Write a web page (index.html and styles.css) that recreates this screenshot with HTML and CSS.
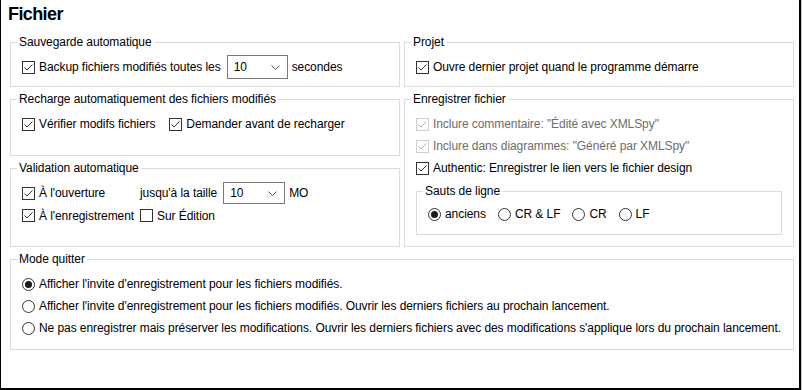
FILE: index.html
```html
<!DOCTYPE html>
<html lang="fr">
<head>
<meta charset="utf-8">
<title>Fichier</title>
<link rel="stylesheet" href="styles.css">
</head>
<body>
<div class="window">
  <h1 class="title">Fichier</h1>
  <div class="grid">
    <fieldset class="group save">
      <legend>Sauvegarde automatique</legend>
      <div class="body pad6">
        <div class="row tall">
          <label class="opt"><svg class="ic" viewBox="0 0 13 13"><rect x="0.5" y="0.5" width="12" height="12" fill="#fff" stroke="#333"/><path d="M2.5 6.5 L5 9 L10.5 3.5" fill="none" stroke="#333"/></svg>Backup fichiers modifiés toutes les</label>
          <span class="select s1">10<svg class="chev" viewBox="0 0 9 5"><path d="M0.5 0.5 L4.5 4.5 L8.5 0.5" fill="none" stroke="#555"/></svg></span>
          <span class="after">secondes</span>
        </div>
      </div>
    </fieldset>

    <fieldset class="group proj">
      <legend>Projet</legend>
      <div class="body pad6">
        <div class="row tall">
          <label class="opt"><svg class="ic" viewBox="0 0 13 13"><rect x="0.5" y="0.5" width="12" height="12" fill="#fff" stroke="#333"/><path d="M2.5 6.5 L5 9 L10.5 3.5" fill="none" stroke="#333"/></svg>Ouvre dernier projet quand le programme démarre</label>
        </div>
      </div>
    </fieldset>

    <fieldset class="group reload">
      <legend>Recharge automatiquement des fichiers modifiés</legend>
      <div class="body pad7">
        <div class="row gap14">
          <label class="opt"><svg class="ic" viewBox="0 0 13 13"><rect x="0.5" y="0.5" width="12" height="12" fill="#fff" stroke="#333"/><path d="M2.5 6.5 L5 9 L10.5 3.5" fill="none" stroke="#333"/></svg>Vérifier modifs fichiers</label>
          <label class="opt"><svg class="ic" viewBox="0 0 13 13"><rect x="0.5" y="0.5" width="12" height="12" fill="#fff" stroke="#333"/><path d="M2.5 6.5 L5 9 L10.5 3.5" fill="none" stroke="#333"/></svg>Demander avant de recharger</label>
        </div>
      </div>
    </fieldset>

    <fieldset class="group valid">
      <legend>Validation automatique</legend>
      <div class="body pad7">
        <div class="vgrid">
          <label class="opt"><svg class="ic" viewBox="0 0 13 13"><rect x="0.5" y="0.5" width="12" height="12" fill="#fff" stroke="#333"/><path d="M2.5 6.5 L5 9 L10.5 3.5" fill="none" stroke="#333"/></svg>À l'ouverture</label>
          <div class="row">
            <span>jusqu'à la taille</span>
            <span class="select s2">10<svg class="chev" viewBox="0 0 9 5"><path d="M0.5 0.5 L4.5 4.5 L8.5 0.5" fill="none" stroke="#555"/></svg></span>
            <span class="after">MO</span>
          </div>
          <label class="opt"><svg class="ic" viewBox="0 0 13 13"><rect x="0.5" y="0.5" width="12" height="12" fill="#fff" stroke="#333"/><path d="M2.5 6.5 L5 9 L10.5 3.5" fill="none" stroke="#333"/></svg>À l'enregistrement</label>
          <label class="opt"><svg class="ic" viewBox="0 0 13 13"><rect x="0.5" y="0.5" width="12" height="12" fill="#fff" stroke="#333"/></svg>Sur Édition</label>
        </div>
      </div>
    </fieldset>

    <fieldset class="group file">
      <legend>Enregistrer fichier</legend>
      <div class="body pad7">
        <label class="opt row disabled"><svg class="ic" viewBox="0 0 13 13"><rect x="0.5" y="0.5" width="12" height="12" fill="#fff" stroke="#cfcfcf"/><path d="M2.5 6.5 L5 9 L10.5 3.5" fill="none" stroke="#b0b0b0"/></svg>Inclure commentaire: "Édité avec XMLSpy"</label>
        <label class="opt row disabled"><svg class="ic" viewBox="0 0 13 13"><rect x="0.5" y="0.5" width="12" height="12" fill="#fff" stroke="#cfcfcf"/><path d="M2.5 6.5 L5 9 L10.5 3.5" fill="none" stroke="#b0b0b0"/></svg>Inclure dans diagrammes: "Généré par XMLSpy"</label>
        <label class="opt row"><svg class="ic" viewBox="0 0 13 13"><rect x="0.5" y="0.5" width="12" height="12" fill="#fff" stroke="#333"/><path d="M2.5 6.5 L5 9 L10.5 3.5" fill="none" stroke="#333"/></svg>Authentic: Enregistrer le lien vers le fichier design</label>
        <fieldset class="group eol">
          <legend>Sauts de ligne</legend>
          <div class="body pad5">
            <div class="row radios">
              <label class="opt"><svg class="ic" viewBox="0 0 13 13"><circle cx="6.5" cy="6.5" r="6" fill="#fff" stroke="#333"/><circle cx="6.5" cy="6.5" r="3.5" fill="#1a1a1a"/></svg>anciens</label>
              <label class="opt"><svg class="ic" viewBox="0 0 13 13"><circle cx="6.5" cy="6.5" r="6" fill="#fff" stroke="#333"/></svg>CR &amp; LF</label>
              <label class="opt"><svg class="ic" viewBox="0 0 13 13"><circle cx="6.5" cy="6.5" r="6" fill="#fff" stroke="#333"/></svg>CR</label>
              <label class="opt"><svg class="ic" viewBox="0 0 13 13"><circle cx="6.5" cy="6.5" r="6" fill="#fff" stroke="#333"/></svg>LF</label>
            </div>
          </div>
        </fieldset>
      </div>
    </fieldset>

    <fieldset class="group quit">
      <legend>Mode quitter</legend>
      <div class="body pad7">
        <label class="opt row"><svg class="ic" viewBox="0 0 13 13"><circle cx="6.5" cy="6.5" r="6" fill="#fff" stroke="#333"/><circle cx="6.5" cy="6.5" r="3.5" fill="#1a1a1a"/></svg>Afficher l'invite d'enregistrement pour les fichiers modifiés.</label>
        <label class="opt row"><svg class="ic" viewBox="0 0 13 13"><circle cx="6.5" cy="6.5" r="6" fill="#fff" stroke="#333"/></svg>Afficher l'invite d'enregistrement pour les fichiers modifiés. Ouvrir les derniers fichiers au prochain lancement.</label>
        <label class="opt row"><svg class="ic" viewBox="0 0 13 13"><circle cx="6.5" cy="6.5" r="6" fill="#fff" stroke="#333"/></svg>Ne pas enregistrer mais préserver les modifications. Ouvrir les derniers fichiers avec des modifications s'applique lors du prochain lancement.</label>
      </div>
    </fieldset>
  </div>
</div>
</body>
</html>
```

FILE: styles.css
```css
* { box-sizing: border-box; }
html { background: #c8c8c8; }
html, body { margin: 0; padding: 0; }
body {
  font-family: "Liberation Sans", Arial, sans-serif;
  font-size: 12px;
  letter-spacing: -0.07px;
  color: #000;
}
.window {
  width: 801px;
  height: 390px;
  background: #fff;
  border-left: 1px solid #000;
  border-right: 2px solid #000;
  border-bottom: 2px solid #000;
  padding: 2px 0 0 9px;
}
.title {
  margin: 0 0 9px -2px;
  font-size: 18px;
  line-height: 24px;
  font-weight: bold;
  letter-spacing: -0.6px;
}
.grid {
  display: grid;
  grid-template-columns: 390px 390px;
  grid-template-rows: 52px 64px 86px 98px;
  column-gap: 4px;
  row-gap: 5px;
  grid-template-areas:
    "save proj"
    "reload file"
    "valid file"
    "quit quit";
}
.save { grid-area: save; }
.proj { grid-area: proj; }
.reload { grid-area: reload; }
.valid { grid-area: valid; }
.file { grid-area: file; }
.quit { grid-area: quit; }

.group {
  margin: 0;
  padding: 0;
  border: 1px solid #dcdcdc;
  min-width: 0;
}
.group legend {
  margin-left: 6px;
  padding: 0 2px;
  line-height: 14px;
}
.body { padding: 0 11px; }
.pad5 { padding-top: 5px; }
.pad6 { padding-top: 6px; }
.pad7 { padding-top: 7px; }

.row {
  display: flex;
  align-items: center;
  height: 22px;
  gap: 4px;
}
.row.tall { height: 24px; }
.gap14 { gap: 14px; }

.opt {
  display: flex;
  align-items: center;
  gap: 4px;
  white-space: nowrap;
}
.ic {
  width: 13px;
  height: 13px;
  flex: none;
}
.disabled { color: #6d6d6d; }

.select {
  display: flex;
  align-items: center;
  justify-content: space-between;
  border: 1px solid #7a7a7a;
  background: #fff;
  padding: 0 7px 0 6px;
  margin-left: 2px;
}
.select.s1 { width: 61px; height: 24px; }
.select.s2 { width: 62px; height: 22px; }
.chev { width: 9px; height: 5px; }
.after { margin-left: 0; }

.vgrid {
  display: grid;
  grid-template-columns: 118px auto;
  grid-template-rows: 22px 23px;
  align-items: center;
}

.eol {
  margin-top: 5px;
  height: 51px;
}
.radios { gap: 12px; }
```
